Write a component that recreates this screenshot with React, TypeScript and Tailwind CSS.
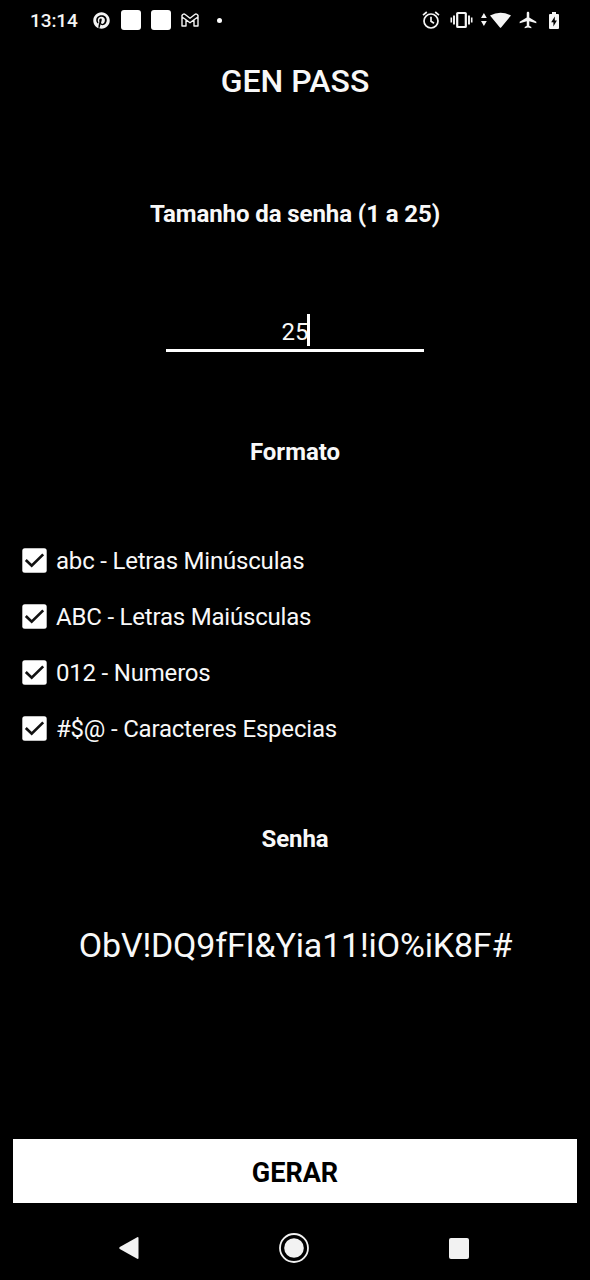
import React, { useState } from "react";
import { FaPinterest } from "react-icons/fa";
import { MdAirplanemodeActive } from "react-icons/md";

const formats = [
  "abc - Letras Minúsculas",
  "ABC - Letras Maiúsculas",
  "012 - Numeros",
  "#$@ - Caracteres Especias",
];

function StatusBar() {
  return (
    <header className="flex h-10 shrink-0 items-center justify-between pr-[31px] pl-[30px] text-[#f5f5f5]">
      <div className="flex items-center">
        <span className="w-[63px] pt-px text-[19px] leading-10 font-medium tracking-[-0.1px]">13:14</span>
        <FaPinterest className="size-[17px]" />
        <span className="ml-[11px] size-5 rounded-[3px] bg-white" />
        <span className="ml-[10px] size-5 rounded-[3px] bg-white" />
        <svg className="ml-[10px] h-[14px] w-[18px]" viewBox="0 0 18 14" fill="none" stroke="currentColor" strokeWidth="1.4" strokeLinejoin="round">
          <path d="M1 2.500Q2.500.3 4.200 1.500L9 5.200l4.800-3.700Q15.500.3 17 2.500V13h-4V6.800L9 9.800 5 6.800V13H1ZM1 4l4 2.800M17 4l-4 2.800" />
        </svg>
        <span className="ml-[18px] size-[5px] rounded-full bg-white" />
      </div>
      <div className="flex items-center">
        <svg className="mr-[10px] size-[18px]" viewBox="0 0 18 18" fill="none" stroke="currentColor" strokeWidth="1.7">
          <circle cx="9" cy="10" r="7" />
          <path d="M9 5.800V10.200l3 2M1 4.200 4.800 1M17 4.200 13.200 1" />
        </svg>
        <svg className="h-[18px] w-[23px]" viewBox="0 0 23 18" fill="none" stroke="currentColor">
          <rect x="7.200" y="2" width="8.600" height="14" rx=".6" strokeWidth="2.200" />
          <path d="M4 4.500v9M19 4.500v9" strokeWidth="1.900" />
          <path d="M1.300 6.500v5M21.700 6.500v5" strokeWidth="1.600" />
        </svg>
        <svg className="ml-[7px] h-[18px] w-[31px]" viewBox="0 0 31 18" fill="currentColor">
          <path d="M1 7 3.900 2l2.900 5ZM1 10h5.800L3.900 15ZM10 4.500Q20.500-1 31 4.500L21.300 16.200q-.8 1-1.600 0Z" />
        </svg>
        <MdAirplanemodeActive className="ml-[7px] size-[20px]" />
        <svg className="ml-[11px] h-[17px] w-[10px]" viewBox="0 0 10 17" fill="currentColor">
          <path d="M3 0h4v2h2q1 0 1 1v13q0 1-1 1H1q-1 0-1-1V3q0-1 1-1h2Z" />
          <path d="M5.800 4.500 2.200 10.300h2.200v4.200l3.500-6H5.800Z" fill="#000" />
        </svg>
      </div>
    </header>
  );
}

function FormatOption({ label }: { label: string }) {
  const [checked, setChecked] = useState(true);
  return (
    <label className="flex h-14 items-center">
      <input type="checkbox" className="sr-only" checked={checked} onChange={() => setChecked(!checked)} />
      <svg className="mr-[9px] mb-[2px] size-[25px]" viewBox="0 0 25 25" fill="none">
        <rect x=".3" y=".3" width="24.400" height="24.400" rx="2.500" fill="#fff" />
        {checked && <path d="m3.800 12 5.900 5.700L21.200 6.400" stroke="#111" strokeWidth="2.700" />}
      </svg>
      <span className="text-[24px] leading-8 tracking-[-0.2px]">{label}</span>
    </label>
  );
}

export default function App() {
  return (
    <div className="flex h-[1280px] w-[590px] flex-col overflow-hidden bg-black font-['Roboto',sans-serif] text-[#f8f8f8]">
      <StatusBar />
      <h1 className="flex h-[84px] items-center justify-center pb-[2px] text-[32px] font-medium">GEN PASS</h1>
      <h2 className="flex h-[178px] items-center justify-center pt-px text-[24px] font-bold tracking-[-0.08px]">Tamanho da senha (1 a 25)</h2>
      <div className="mx-auto flex h-[50px] w-[258px] justify-center border-b-[3px] border-white pt-3">
        <span className="relative text-[24px] leading-9">
          25
          <span className="absolute top-0 -right-[2px] h-8 w-[3px] bg-white" />
        </span>
      </div>
      <h2 className="flex h-[181px] items-center justify-center pt-[18px] text-[24px] font-bold">Formato</h2>
      <div className="flex flex-col pl-[22px]">
        {formats.map((label) => (
          <FormatOption key={label} label={label} />
        ))}
      </div>
      <h2 className="flex h-[164px] items-center justify-center text-[24px] font-bold tracking-[-0.1px]">Senha</h2>
      <output className="flex h-12 items-center justify-center pl-px text-[34px] tracking-[-0.18px]">ObV!DQ9fFI&amp;Yia11!iO%iK8F#</output>
      <button className="mx-[13px] mt-[170px] flex h-16 shrink-0 items-center justify-center bg-white pt-[4px] text-[27px] font-bold text-black">
        GERAR
      </button>
      <nav className="flex flex-1 items-center pt-[13px] pl-[119px] text-[#f2f2f2]">
        <svg className="h-[22px] w-5" viewBox="0 0 20 22" fill="currentColor">
          <path d="M18.200.2Q19.500-.3 19.500 1v20q0 1.300-1.300.8L.8 11.900Q-.3 11 .8 10.100Z" />
        </svg>
        <svg className="ml-[140px] size-[30px]" viewBox="0 0 30 30" fill="none" stroke="currentColor">
          <circle cx="15" cy="15" r="14" strokeWidth="1.800" />
          <circle cx="15" cy="15" r="9.800" fill="currentColor" stroke="none" />
        </svg>
        <span className="ml-[140px] h-[21px] w-5 rounded-[2px] bg-[#f2f2f2]" />
      </nav>
    </div>
  );
}
